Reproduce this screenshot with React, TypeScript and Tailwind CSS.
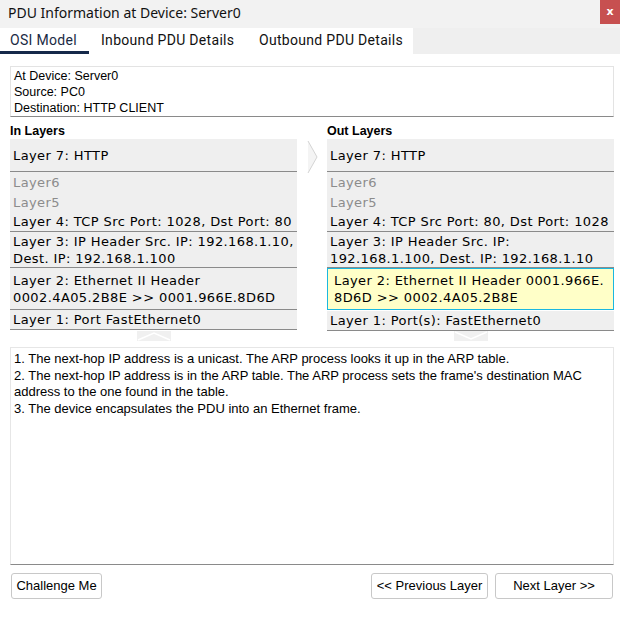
import React from 'react';

// One row in a layer column
type Row = { text: React.ReactNode; h: string; dim?: boolean; hl?: boolean; line?: boolean };

const inRows: Row[] = [
  { text: 'Layer 7: HTTP', h: 'h-[33px]', line: true },
  { text: 'Layer6', h: 'h-[20px]', dim: true },
  { text: 'Layer5', h: 'h-[20px]', dim: true },
  { text: 'Layer 4: TCP Src Port: 1028, Dst Port: 80', h: 'h-[20px]', line: true },
  { text: <>Layer 3: IP Header Src. IP: 192.168.1.10,<br />Dest. IP: 192.168.1.100</>, h: 'h-[36px]', line: true },
  { text: <>Layer 2: Ethernet II Header<br />0002.4A05.2B8E &gt;&gt; 0001.966E.8D6D</>, h: 'h-[42px]', line: true },
  { text: 'Layer 1: Port FastEthernet0', h: 'h-[20px]', line: true },
];

const outRows: Row[] = [
  { text: 'Layer 7: HTTP', h: 'h-[33px]', line: true },
  { text: 'Layer6', h: 'h-[20px]', dim: true },
  { text: 'Layer5', h: 'h-[20px]', dim: true },
  { text: 'Layer 4: TCP Src Port: 80, Dst Port: 1028', h: 'h-[20px]', line: true },
  { text: <>Layer 3: IP Header Src. IP:<br />192.168.1.100, Dest. IP: 192.168.1.10</>, h: 'h-[36px]', line: true },
  { text: <>Layer 2: Ethernet II Header 0001.966E.<br />8D6D &gt;&gt; 0002.4A05.2B8E</>, h: 'h-[42px]', hl: true },
  { text: 'Layer 1: Port(s): FastEthernet0', h: 'h-[20px]', line: true },
];

const LayerColumn: React.FC<{ title: string; rows: Row[] }> = ({ title, rows }) => (
  <div className="flex flex-col">
    <div className="h-[22px] pt-[6px] text-[12.5px] font-bold text-black leading-[16px] font-['Liberation_Sans',sans-serif]">{title}</div>
    {rows.map((r, i) => (
      <div
        key={i}
        className={`${r.h} flex items-center whitespace-nowrap text-[13px] tracking-[0.4px] leading-[17px] font-['DejaVu_Sans',sans-serif] ${
          r.hl
            ? 'bg-[#ffffc8] border border-[#1ab7e0] px-[6px] mb-[1px]'
            : `bg-[#efefef] px-[3px] ${r.line ? 'border-b border-[#8a8a8a]' : ''}`
        } ${r.dim ? 'text-[#8c8c8c]' : 'text-black'}`}
      >
        <div>{r.text}</div>
      </div>
    ))}
  </div>
);

export default function App() {
  return (
    <div className="w-[620px] h-[619px] bg-white flex flex-col overflow-hidden">
      {/* title bar */}
      <div className="h-[28px] bg-[#f2f2f2] flex items-start justify-between">
        <div className="pl-[8px] pt-[3px] text-[14px] text-[#111] font-['Noto_Sans',sans-serif] leading-[20px]">
          PDU Information at Device: Server0
        </div>
        <div className="w-[20px] h-[24px] bg-[#c75050] flex items-center justify-center text-white text-[11px] font-bold font-['DejaVu_Sans',sans-serif]">
          x
        </div>
      </div>

      {/* tabs */}
      <div className="h-[26px] bg-[#efefef] flex">
        <div className="bg-white flex w-[413px] whitespace-nowrap text-[14px] tracking-[0.3px] font-['Roboto',sans-serif] leading-[17px]">
          <div className="w-[89px] relative pl-[10px] pt-[4px] text-[#1a2a44]">
            OSI Model
            <span className="absolute left-0 right-0 bottom-0 h-[3px] bg-[#15294a]" />
          </div>
          <div className="w-[157px] pl-[12px] pt-[4px] text-[#111]">Inbound PDU Details</div>
          <div className="pl-[13px] pt-[4px] text-[#111]">Outbound PDU Details</div>
        </div>
      </div>

      <div className="pl-[10px] pr-[6px] pt-[12px] flex flex-col">
        {/* device info */}
        <div className="h-[51px] border border-[#e3e3e3] border-b-[#8a8a8a] px-[3px] pt-[1px] text-[12.5px] leading-[16px] text-black font-['Liberation_Sans',sans-serif]">
          <div>At Device: Server0</div>
          <div>Source: PC0</div>
          <div>Destination: HTTP CLIENT</div>
        </div>

        {/* layers */}
        <div className="grid grid-cols-[287px_30px_287px]">
          <LayerColumn title="In Layers" rows={inRows} />
          <div className="pt-[23px] pl-[10px]">
            <svg width="11" height="34" viewBox="0 0 11 34">
              <polyline points="1,1 10,17 1,33" fill="#f4f4f4" stroke="#d4d4d4" strokeWidth="1" />
            </svg>
          </div>
          <LayerColumn title="Out Layers" rows={outRows} />
        </div>

        <div className="grid grid-cols-[287px_30px_287px] h-[16px]">
          <div className="flex justify-center">
            <svg width="34" height="10" viewBox="0 0 34 10">
              <rect x="0" y="0" width="34" height="10" fill="#f0f0f0" />
              <polyline points="1,9 17,2 33,9" fill="none" stroke="#ffffff" strokeWidth="1.5" />
            </svg>
          </div>
          <div />
          <div className="flex justify-center">
            <svg width="34" height="10" viewBox="0 0 34 10">
              <rect x="0" y="0" width="34" height="10" fill="#f0f0f0" />
              <polyline points="1,1 17,8 33,1" fill="none" stroke="#ffffff" strokeWidth="1.5" />
            </svg>
          </div>
        </div>

        {/* description */}
        <div className="h-[218px] border border-[#e6e6e6] border-b-[#8a8a8a] px-[3px] pt-[3px] text-[13px] leading-[16.5px] text-black font-['Liberation_Sans',sans-serif]">
          <div>1. The next-hop IP address is a unicast. The ARP process looks it up in the ARP table.</div>
          <div>2. The next-hop IP address is in the ARP table. The ARP process sets the frame's destination MAC address to the one found in the table.</div>
          <div>3. The device encapsulates the PDU into an Ethernet frame.</div>
        </div>

        {/* buttons */}
        <div className="flex items-center mt-[8px] text-[13px] font-['Liberation_Sans',sans-serif] text-black">
          <button className="h-[26px] w-[91px] ml-[1px] bg-white border border-[#c8c8c8] rounded-[3px]">Challenge Me</button>
          <div className="flex-1" />
          <button className="h-[26px] w-[117px] bg-white border border-[#c8c8c8] rounded-[3px]">&lt;&lt; Previous Layer</button>
          <button className="h-[26px] w-[118px] ml-[7px] mr-[1px] bg-white border border-[#c8c8c8] rounded-[3px]">Next Layer &gt;&gt;</button>
        </div>
      </div>
    </div>
  );
}
